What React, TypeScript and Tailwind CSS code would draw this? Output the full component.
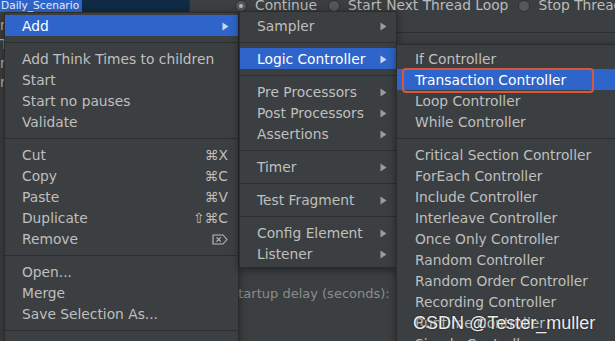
import React from "react";

type Row =
  | { kind: "sep" }
  | { kind: "item"; label: string; shortcut?: React.ReactNode; arrow?: boolean; active?: boolean };

const sep: Row = { kind: "sep" };
const it = (label: string, extra: Partial<Omit<Extract<Row, { kind: "item" }>, "kind" | "label">> = {}): Row => ({
  kind: "item",
  label,
  ...extra,
});

function Arrow({ active }: { active?: boolean }) {
  return (
    <svg width="7" height="9" viewBox="0 0 7 9" className="shrink-0">
      <path d="M0.5 0.5 L6.5 4.5 L0.5 8.5 Z" fill={active ? "#c9d6f2" : "#9a9c9e"} />
    </svg>
  );
}

function DeleteKey() {
  return (
    <svg width="16" height="11" viewBox="0 0 16 11" className="shrink-0">
      <path d="M1 1 H11 L15 5.5 L11 10 H1 Z" fill="none" stroke="#bdbdbd" strokeWidth="1.1" strokeLinejoin="round" />
      <path d="M4.5 3.3 L8.7 7.7 M8.7 3.3 L4.5 7.7" stroke="#bdbdbd" strokeWidth="1.1" />
    </svg>
  );
}

function MenuRows({ rows, padLeft }: { rows: Row[]; padLeft: string }) {
  return (
    <>
      {rows.map((r, i) =>
        r.kind === "sep" ? (
          <div key={i} className="h-[12px] flex items-center">
            <div className="h-px w-full bg-[#2c2e30]" />
          </div>
        ) : (
          <div
            key={i}
            className={`h-[21px] pt-[2px] flex items-center justify-between pr-[9px] ${padLeft} ${
              r.active ? "bg-[#2f65ca] text-white" : "text-[#bfbfbf]"
            }`}
          >
            <span className="whitespace-nowrap">{r.label}</span>
            {r.shortcut ? (
              <span className="whitespace-nowrap pr-[1px] text-[#bfbfbf] flex items-center">{r.shortcut}</span>
            ) : null}
            {r.arrow ? <Arrow active={r.active} /> : null}
          </div>
        )
      )}
    </>
  );
}

function Radio({ on }: { on?: boolean }) {
  return (
    <span className="w-[12px] h-[12px] rounded-full bg-[#55585a] border border-[#2e3032] flex items-center justify-center shrink-0">
      {on ? <span className="w-[4px] h-[4px] rounded-full bg-[#b8b8b8]" /> : null}
    </span>
  );
}

const mainRows: Row[] = [
  it("Add", { arrow: true, active: true }),
  sep,
  it("Add Think Times to children"),
  it("Start"),
  it("Start no pauses"),
  it("Validate"),
  sep,
  it("Cut", { shortcut: "⌘X" }),
  it("Copy", { shortcut: "⌘C" }),
  it("Paste", { shortcut: "⌘V" }),
  it("Duplicate", { shortcut: "⇧⌘C" }),
  it("Remove", { shortcut: <DeleteKey /> }),
  sep,
  it("Open..."),
  it("Merge"),
  it("Save Selection As..."),
  sep,
  it("Save Node As Image", { shortcut: "⌘G" }),
];

const addRows: Row[] = [
  it("Sampler", { arrow: true }),
  sep,
  it("Logic Controller", { arrow: true, active: true }),
  sep,
  it("Pre Processors", { arrow: true }),
  it("Post Processors", { arrow: true }),
  it("Assertions", { arrow: true }),
  sep,
  it("Timer", { arrow: true }),
  sep,
  it("Test Fragment", { arrow: true }),
  sep,
  it("Config Element", { arrow: true }),
  it("Listener", { arrow: true }),
];

const logicRows: Row[] = [
  it("If Controller"),
  it("Transaction Controller", { active: true }),
  it("Loop Controller"),
  it("While Controller"),
  sep,
  it("Critical Section Controller"),
  it("ForEach Controller"),
  it("Include Controller"),
  it("Interleave Controller"),
  it("Once Only Controller"),
  it("Random Controller"),
  it("Random Order Controller"),
  it("Recording Controller"),
  it("Runtime Controller"),
  it("Simple Controller"),
];

export default function App() {
  return (
    <div className="relative w-[615px] h-[341px] overflow-hidden bg-[#3c3f41] font-['DejaVu_Sans',sans-serif] text-[13.8px] leading-none">
      {/* background application */}
      <div className="flex h-full">
        <div className="w-[190px] shrink-0 border-r border-[#2b2d2f] flex flex-col">
          <div className="-mt-[4px] h-[16px] flex items-stretch bg-[#0f2a44]">
            <span className="w-[82px] bg-[#2f65ca] pl-[1px] flex items-end pb-[1px] text-[10.6px] text-[#e8eefc] whitespace-nowrap">
              Daily_Scenario
            </span>
          </div>
          <div className="flex flex-col text-[#bbbbbb] pl-0">
            <div className="h-[19px] mt-[4px] flex items-center">nnnnnn</div>
            <div className="h-[19px] flex items-center">TTTTTT</div>
            <div className="h-[19px] flex items-center">nnnnnn</div>
            <div className="h-[19px] flex items-center">rrrrrr</div>
          </div>
        </div>
        <div className="flex-1 flex flex-col">
          <div className="-mt-[3px] h-[18px] flex items-center pl-[45px] text-[#bbbbbb] whitespace-nowrap">
            <Radio on />
            <span className="ml-[8px]">Continue</span>
            <span className="ml-[11px]"><Radio /></span>
            <span className="ml-[8px]">Start Next Thread Loop</span>
            <span className="ml-[10px]"><Radio /></span>
            <span className="ml-[8px]">Stop Thread</span>
            <span className="ml-[10px]"><Radio /></span>
          </div>
          <div className="mt-[17px] h-px bg-[#2b2d2f]" />
          <div className="mt-[251px] h-[18px] flex items-center pl-[40px] text-[13px] text-[#8c8c8c] whitespace-nowrap">
            Startup delay (seconds):
          </div>
        </div>
      </div>

      {/* context menu */}
      <div className="absolute left-[4px] top-[12px] w-[235px] h-[345px] bg-[#3c3f41] border border-[#2a2c2e] shadow-[0_2px_8px_rgba(0,0,0,0.45)] pt-[2px]">
        <MenuRows rows={mainRows} padLeft="pl-[17px]" />
      </div>

      {/* Add submenu */}
      <div className="absolute left-[239px] top-[11px] w-[158px] bg-[#3c3f41] border border-[#2a2c2e] shadow-[0_2px_8px_rgba(0,0,0,0.45)] py-[3px]">
        <MenuRows rows={addRows} padLeft="pl-[17px]" />
      </div>

      {/* Logic Controller submenu */}
      <div className="absolute left-[396px] top-[44px] w-[225px] h-[310px] bg-[#3c3f41] border border-[#2a2c2e] shadow-[0_2px_8px_rgba(0,0,0,0.45)] pt-[3px]">
        <MenuRows rows={logicRows} padLeft="pl-[18px]" />
      </div>

      {/* red annotation */}
      <div className="absolute left-[402px] top-[68px] w-[192px] h-[25px] rounded-[4px] border-2 border-[#d9573b]" />

      {/* watermark */}
      <div className="absolute left-[413px] top-[312px] font-['Liberation_Sans',sans-serif] text-[18px] leading-[22px] text-[#ececec] [text-shadow:0_0_2px_#1a1a1a] whitespace-nowrap">
        CSDN @Tester_muller
      </div>
    </div>
  );
}
